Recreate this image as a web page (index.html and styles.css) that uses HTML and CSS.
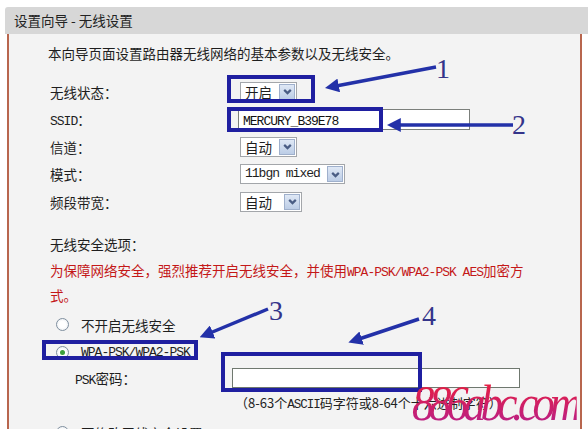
FILE: index.html
```html
<!DOCTYPE html>
<html lang="zh-CN">
  <head>
    <meta charset="UTF-8" />
    <title>设置向导 - 无线设置</title>
    <link rel="stylesheet" href="styles.css">
  </head>
  <body>
    <div class="header">设置向导 - 无线设置</div>
    <div class="panel">
      <p class="intro">本向导页面设置路由器无线网络的基本参数以及无线安全。</p>

      <div class="form">
        <div class="row">
          <span class="label">无线状态：</span>
          <div class="select sel-57">
            <span class="val">开启</span>
            <span class="btn"><svg viewBox="0 0 10 10"><path d="M2 3.5 L5 6.5 L8 3.5" /></svg></span>
          </div>
        </div>
        <div class="row">
          <span class="label"><span class="en">SSID</span>：</span>
          <div class="textbox ssid"><span class="en">MERCURY_B39E78</span></div>
        </div>
        <div class="row">
          <span class="label">信道：</span>
          <div class="select sel-57">
            <span class="val">自动</span>
            <span class="btn"><svg viewBox="0 0 10 10"><path d="M2 3.5 L5 6.5 L8 3.5" /></svg></span>
          </div>
        </div>
        <div class="row">
          <span class="label">模式：</span>
          <div class="select sel-105">
            <span class="val en">11bgn mixed</span>
            <span class="btn"><svg viewBox="0 0 10 10"><path d="M2 3.5 L5 6.5 L8 3.5" /></svg></span>
          </div>
        </div>
        <div class="row">
          <span class="label">频段带宽：</span>
          <div class="select sel-62">
            <span class="val">自动</span>
            <span class="btn"><svg viewBox="0 0 10 10"><path d="M2 3.5 L5 6.5 L8 3.5" /></svg></span>
          </div>
        </div>
      </div>

      <div class="security">
        <p class="sec-title">无线安全选项：</p>
        <p class="warn">为保障网络安全，强烈推荐开启无线安全，并使用<span class="en">WPA-PSK/WPA2-PSK AES</span>加密方式。</p>

        <div class="radio-row first">
          <span class="radio"></span>
          <span>不开启无线安全</span>
        </div>
        <div class="radio-row">
          <span class="radio checked"></span>
          <span class="en">WPA-PSK/WPA2-PSK</span>
        </div>
        <div class="psk-row">
          <span class="psk-label"><span class="en">PSK</span>密码：</span>
          <div class="textbox psk"></div>
        </div>
        <p class="hint">（8-63个<span class="en">ASCII</span>码字符或8-64个十六进制字符）</p>
        <div class="radio-row">
          <span class="radio"></span>
          <span>不修改无线安全设置</span>
        </div>
      </div>
    </div>

    <!-- annotations drawn over the screenshot -->
    <svg class="marks" width="588" height="429" viewBox="0 0 588 429">
      <defs>
        <marker id="head" viewBox="0 0 10 10" refX="2" refY="5" markerWidth="4" markerHeight="4" orient="auto-start-reverse">
          <path d="M0 0 L10 5 L0 10 z" fill="#2331a8" />
        </marker>
      </defs>
      <g class="boxes">
        <rect x="229" y="77" width="84" height="24" />
        <rect x="229" y="109" width="152" height="21" />
        <rect x="44" y="342" width="152" height="16" />
        <rect x="223" y="354" width="197" height="36" />
      </g>
      <g class="arrows">
        <line x1="436" y1="67" x2="336" y2="86" marker-end="url(#head)" />
        <line x1="513" y1="125" x2="398" y2="125" marker-end="url(#head)" />
        <line x1="268" y1="309" x2="210" y2="333" marker-end="url(#head)" />
        <line x1="419" y1="319" x2="359" y2="339" marker-end="url(#head)" />
      </g>
      <g class="nums">
        <text x="436" y="78">1</text>
        <text x="512" y="134">2</text>
        <text x="269" y="320">3</text>
        <text x="422" y="325">4</text>
      </g>
    </svg>

    <div class="watermark">886abc.com</div>
  </body>
</html>
```

FILE: styles.css
```css
html,
body {
  margin: 0;
  height: 429px;
  overflow: hidden;
}
body {
  position: relative;
  font-family: "Noto Sans CJK SC", sans-serif;
  font-size: 13.5px;
  color: #1e1e1e;
  background: #fff;
}
p {
  margin: 0;
}
.en {
  font-family: "Liberation Mono", monospace;
  font-size: 13px;
  letter-spacing: -1px;
}
.header {
  margin: 7px 0 0 5px;
  height: 27px;
  line-height: 27px;
  padding-left: 9px;
  background: #d7d7d7;
  border-radius: 3px 0 0 0;
  color: #222;
}
.panel {
  margin-left: 7px;
  width: 575px;
  height: 400px;
  box-sizing: border-box;
  border-left: 2px solid #b8664e;
  border-right: 2px solid #b8664e;
  background: #f3f3f3;
  padding: 9px 0 0 39px;
}
.intro {
  line-height: 20px;
}
.form {
  margin-top: 15px;
  padding-left: 2px;
}
.row {
  display: flex;
  align-items: center;
  height: 27.5px;
}
.label {
  width: 190px;
  flex: none;
}
.select {
  display: flex;
  align-items: center;
  height: 20px;
  box-sizing: border-box;
  border: 1px solid #a3a6aa;
  background: #fff;
}
.sel-57 { width: 57px; }
.sel-62 { width: 62px; }
.sel-105 { width: 105px; }
.select .val {
  flex: 1;
  padding-left: 4px;
  line-height: 18px;
}
.select .btn {
  width: 16px;
  height: 16px;
  margin-right: 1px;
  box-sizing: border-box;
  border: 1px solid #9fb0cc;
  background: linear-gradient(#dfe8f5, #bccde6);
  display: flex;
  align-items: center;
  justify-content: center;
}
.select .btn svg {
  width: 11px;
  height: 11px;
}
.select .btn path {
  fill: none;
  stroke: #4a5d84;
  stroke-width: 2;
}
.textbox {
  box-sizing: border-box;
  border: 1px solid #7b7f7b;
  background: #fff;
  height: 21px;
  line-height: 19px;
}
.ssid {
  width: 232px;
  margin-left: -2px;
  padding-left: 4px;
  color: #111;
}
.security {
  padding-left: 2px;
}
.sec-title {
  margin-top: 17px;
  line-height: 22px;
}
.warn {
  margin-top: 4px;
  width: 490px;
  line-height: 22px;
  color: #c41818;
}
.radio-row {
  display: flex;
  align-items: center;
  gap: 12px;
  height: 28px;
  padding-left: 6px;
}
.radio-row.first {
  margin-top: 5px;
}
.radio {
  width: 13px;
  height: 13px;
  box-sizing: border-box;
  border: 1px solid #7f8f9f;
  border-radius: 50%;
  background: radial-gradient(circle, #fff 40%, #e4e8ec);
  display: flex;
  align-items: center;
  justify-content: center;
}
.radio.checked::after {
  content: "";
  width: 5px;
  height: 5px;
  border-radius: 50%;
  background: #3c9f3c;
}
.psk-row {
  display: flex;
  align-items: center;
  height: 22px;
  padding-left: 25px;
}
.psk-label {
  width: 157px;
  flex: none;
}
.psk {
  width: 288px;
  height: 20px;
  border-color: #6f786f;
}
.hint {
  margin-top: 4px;
  padding-left: 185px;
  line-height: 20px;
  font-size: 13px;
  color: #222;
}
.hint .en {
  font-size: 12.5px;
}
.hint + .radio-row {
  margin-top: 4px;
}
.marks {
  position: absolute;
  left: 0;
  top: 0;
  pointer-events: none;
}
.boxes rect {
  fill: none;
  stroke: #1f1fa0;
  stroke-width: 4;
}
.arrows line {
  stroke: #2331a8;
  stroke-width: 3.5;
}
.nums text {
  font-family: "Liberation Serif", serif;
  font-size: 28px;
  fill: #34348a;
}
.watermark {
  position: absolute;
  left: 412px;
  top: 378px;
  font-family: "Liberation Serif", serif;
  font-style: italic;
  font-size: 50px;
  letter-spacing: -6px;
  line-height: 50px;
  transform: scaleX(0.9);
  transform-origin: left top;
  background: linear-gradient(#ec1e38, #b5208e);
  -webkit-background-clip: text;
  background-clip: text;
  color: transparent;
}
```
